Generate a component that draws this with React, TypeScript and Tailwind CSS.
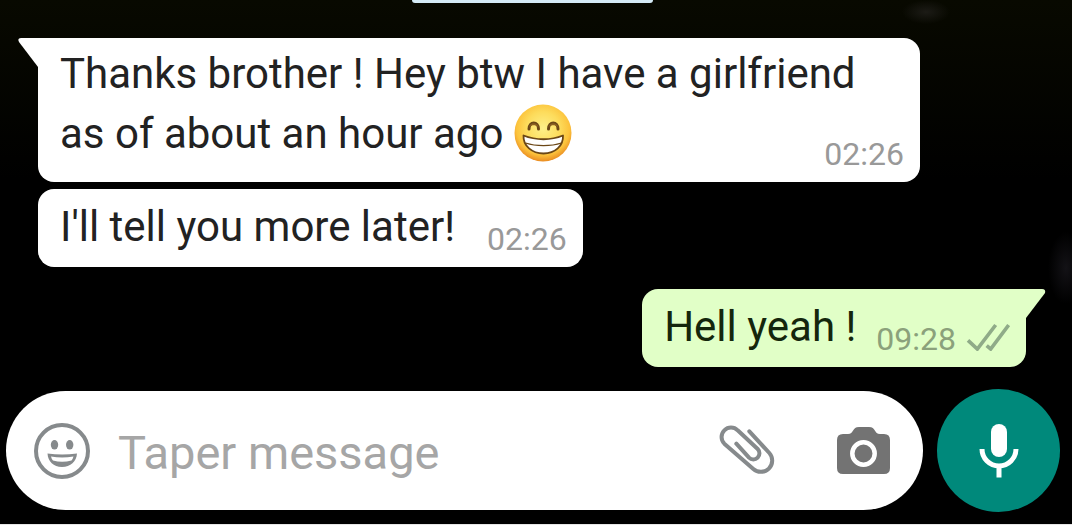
import { useState } from 'react';

type Message = {
  id: number;
  text: string;
  time: string;
  mine?: boolean;
  grin?: boolean;
  tail?: boolean;
};

const messages: Message[] = [
  { id: 1, text: 'Thanks brother ! Hey btw I have a girlfriend as of about an hour ago', time: '02:26', grin: true, tail: true },
  { id: 2, text: "I'll tell you more later!", time: '02:26' },
  { id: 3, text: 'Hell yeah !', time: '09:28', mine: true, tail: true },
];

function GrinEmoji() {
  return (
    <svg role="img" aria-label="grinning face" viewBox="0 0 58 58" className="inline-block h-[58px] w-[58px] align-top">
      <defs>
        <radialGradient id="face" cx="0.5" cy="0.42" r="0.58">
          <stop offset="0" stopColor="#fdf08a" />
          <stop offset="0.5" stopColor="#fddc5c" />
          <stop offset="0.8" stopColor="#fcc33c" />
          <stop offset="1" stopColor="#ea8c22" />
        </radialGradient>
      </defs>
      <circle cx="29" cy="29" r="28.5" fill="url(#face)" />
      <g fill="none" stroke="#6b4716" strokeWidth="3" strokeLinecap="round">
        <path d="M15 25C15 17 24.500 17 24.500 25" />
        <path d="M34.500 25C34.500 17 44 17 44 25" />
      </g>
      <g fill="#8a5f22">
        <path d="M15 23C16 18 23.500 18 24.500 23C21 20.500 18.500 20.500 15 23Z" />
        <path d="M34.500 23C35.500 18 43 18 44 23C40.500 20.500 38 20.500 34.500 23Z" />
      </g>
      <path d="M9.500 31.500C22 36.500 37 36.500 49 31.500C49.500 42 41 49.500 29.500 49.500S9 42 9.500 31.500Z" fill="#fff" stroke="#6b4716" strokeWidth="1.800" strokeLinejoin="round" />
      <path d="M11.500 39C22 42.500 37 42.500 47.500 39" fill="none" stroke="#6b4716" strokeWidth="1.300" />
    </svg>
  );
}

function DoubleCheck() {
  return (
    <svg aria-label="delivered" viewBox="1004 124 132 84" className="mb-1 h-7 w-11" fill="none" stroke="#8fab88" strokeWidth="11">
      <path d="M1010 176L1038 202L1093 130" />
      <path d="M1066 192L1078 202L1132 130" />
    </svg>
  );
}

function Tail({ mine }: { mine?: boolean }) {
  if (mine) {
    return (
      <svg aria-hidden="true" viewBox="0 0 20 29" className="absolute top-0 left-full h-[29px] w-5">
        <path d="M0 0H16Q20 0 19 4L0 29Z" fill="#e1ffc7" />
      </svg>
    );
  }
  return (
    <svg aria-hidden="true" viewBox="0 0 20 29" className="absolute top-0 right-full h-[29px] w-5">
      <path d="M20 0H3Q-1 0 1 4L20 29Z" fill="#fff" />
    </svg>
  );
}

function Bubble({ message }: { message: Message }) {
  const { text, time, mine, grin, tail } = message;
  const color = mine ? 'mt-[15px] self-end bg-[#e1ffc7] text-[#14260c]' : 'self-start bg-white text-[#222222]';
  const corner = tail ? (mine ? 'rounded-tr-none' : 'rounded-tl-none') : '';
  const padding = grin ? 'pt-1.5 pb-3' : 'pt-2 pb-2.5';

  return (
    <div className={`relative max-w-[882px] rounded-2xl pr-4 pl-[22px] ${padding} ${color} ${corner}`}>
      {tail && <Tail mine={mine} />}
      <div className="flow-root text-[42px] leading-[60px]">
        {text}
        {grin && ' '}
        {grin && <GrinEmoji />}
        <div
          className={`float-right flex items-end gap-2.5 text-[32px] leading-8 ${grin ? 'mt-[34px]' : 'mt-[26px]'} ${
            mine ? 'ml-5 text-[#8ba17b]' : 'ml-8 text-[#999999]'
          }`}
        >
          <span>{time}</span>
          {mine && <DoubleCheck />}
        </div>
      </div>
    </div>
  );
}

function Composer() {
  const [draft, setDraft] = useState('');

  return (
    <form className="flex items-center gap-3.5 pr-3 pb-3 pl-1.5" onSubmit={(e) => e.preventDefault()}>
      <div className="flex h-[119px] min-w-0 flex-1 items-center rounded-full bg-white pr-[33px] pl-7">
        <button type="button" aria-label="Emoji" className="shrink-0">
          <svg viewBox="0 0 56 56" className="h-14 w-14">
            <circle cx="28" cy="28" r="26" fill="none" stroke="#868a8c" strokeWidth="4" />
            <ellipse cx="20.500" cy="21.800" rx="3.700" ry="4.800" fill="#868a8c" />
            <ellipse cx="35.700" cy="21.800" rx="3.700" ry="4.800" fill="#868a8c" />
            <path d="M13.500 30.500Q28 32.500 43 30.500C42.500 38.500 36.500 44 28 44S14 38.500 13.500 30.500Z" fill="#868a8c" />
            <path d="M17 33.500Q28 35.500 39.500 33.500Q38.800 36 37.500 37.500Q28 40 19 37.500Q17.500 36 17 33.500Z" fill="#fff" />
          </svg>
        </button>
        <input
          type="text"
          aria-label="Message"
          placeholder="Taper message"
          value={draft}
          onChange={(e) => setDraft(e.target.value)}
          className="ml-7 min-w-0 flex-1 pt-1 text-[47px] leading-[60px] text-[#222222] outline-none placeholder:text-[#a6a6a6]"
        />
        <button type="button" aria-label="Attach" className="shrink-0">
          <svg viewBox="54 42 174 162" className="h-[54px] w-[58px]" fill="none" stroke="#868a8c" strokeWidth="12" strokeLinecap="round">
            <path d="M148 64L208 129A34 34 0 0 1 160 177L73 101A28 28 0 0 1 113 61L173 117A18 18 0 0 1 147 143L109 101" />
          </svg>
        </button>
        <button type="button" aria-label="Camera" className="ml-[61px] shrink-0">
          <svg viewBox="0 0 53 47" className="h-[47px] w-[53px]">
            <path d="M6 7H11C17 7 15 0 22 0H32C39 0 37 7 43 7H47Q53 7 53 13V41Q53 47 47 47H6Q0 47 0 41V13Q0 7 6 7Z" fill="#737373" />
            <circle cx="26.500" cy="26.500" r="11.200" fill="none" stroke="#fff" strokeWidth="4.500" />
          </svg>
        </button>
      </div>
      <button type="button" aria-label="Record voice message" className="flex h-[123px] w-[123px] shrink-0 items-center justify-center rounded-full bg-[#00897b]">
        <svg viewBox="0 0 40 54" className="h-[54px] w-10">
          <rect x="12" y="0" width="16" height="33" rx="8" fill="#fff" />
          <path d="M3 25A17 17 0 0 0 37 25M20 42V53.500" fill="none" stroke="#fff" strokeWidth="5" />
        </svg>
      </button>
    </form>
  );
}

export default function App() {
  return (
    <div className="flex min-h-screen flex-col border-b border-[#e6e6e6] bg-black bg-[radial-gradient(24px_12px_at_926px_12px,#1c1b16,transparent),radial-gradient(18px_36px_at_1066px_268px,#131216,transparent),linear-gradient(#080900,#000000_180px)] font-['Roboto','Liberation_Sans',sans-serif]">
      <div className="flex justify-center pr-2">
        <div className="h-[3px] w-[241px] rounded-b-lg bg-[#d5ebf6]" />
      </div>
      <main className="flex flex-1 flex-col gap-[7px] pt-[35px] pr-[46px] pb-5 pl-[38px]">
        {messages.map((message) => (
          <Bubble key={message.id} message={message} />
        ))}
      </main>
      <Composer />
    </div>
  );
}
